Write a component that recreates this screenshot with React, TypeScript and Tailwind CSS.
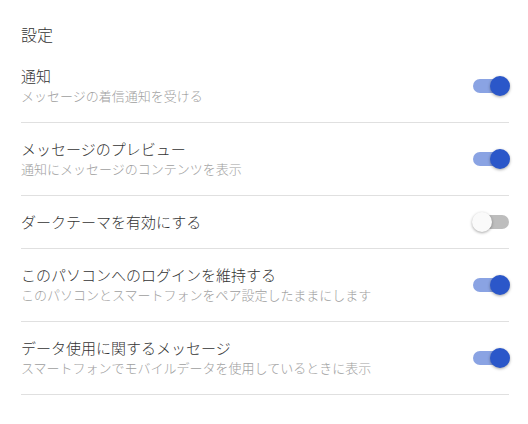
const settings = [
  { title: '通知', sub: 'メッセージの着信通知を受ける', on: true },
  { title: 'メッセージのプレビュー', sub: '通知にメッセージのコンテンツを表示', on: true },
  { title: 'ダークテーマを有効にする', on: false },
  {
    title: 'このパソコンへのログインを維持する',
    sub: 'このパソコンとスマートフォンをペア設定したままにします',
    on: true,
  },
  {
    title: 'データ使用に関するメッセージ',
    sub: 'スマートフォンでモバイルデータを使用しているときに表示',
    on: true,
  },
];

const Toggle = ({ on }: { on: boolean }) => (
  <div className="relative h-[14px] w-[36px] shrink-0">
    <div
      className={
        on
          ? 'h-full w-full rounded-full bg-[#8aa3e3]'
          : 'h-full w-full rounded-full bg-[#bdbdbd]'
      }
    />
    <div
      className={
        on
          ? 'absolute top-[-3px] left-[17px] h-5 w-5 rounded-full bg-[#2b57c9] shadow-[0_1px_3px_rgba(0,0,0,0.35)]'
          : 'absolute top-[-3px] left-[-1px] h-5 w-5 rounded-full bg-[#fafafa] shadow-[0_1px_3px_rgba(0,0,0,0.35)]'
      }
    />
  </div>
);

export default function App() {
  return (
    <div className="min-h-[424px] w-[528px] bg-white pr-[19px] pl-[21px] font-['Noto_Sans_CJK_JP',sans-serif] font-light">
      <h1 className="pt-[22px] pb-[4px] text-[16px] leading-6 text-[#333333]">設定</h1>
      <ul>
        {settings.map((s) => (
          <li
            key={s.title}
            className="flex items-center justify-between border-b border-[#e0e0e0] py-4"
          >
            <div className="flex flex-col">
              <span className="text-[15px] leading-5 text-[#333333]">{s.title}</span>
              {s.sub && (
                <span className="text-[13px] leading-5 text-[#9e9e9e]">{s.sub}</span>
              )}
            </div>
            <Toggle on={s.on} />
          </li>
        ))}
      </ul>
    </div>
  );
}
